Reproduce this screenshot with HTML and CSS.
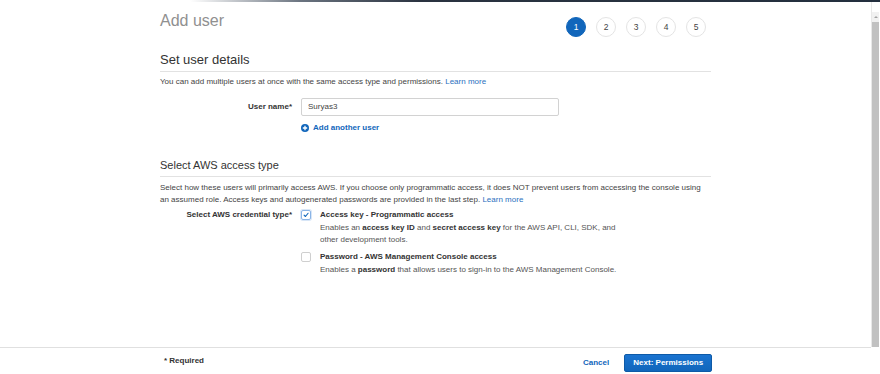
FILE: index.html
```html
<!DOCTYPE html>
<html>
<head>
<meta charset="utf-8">
<link rel="stylesheet" href="styles.css">
</head>
<body>
<div class="topbar"></div>
<div class="frame">
  <div class="page">
    <div class="content">
      <div class="header">
        <h1 class="title">Add user</h1>
        <ol class="steps">
          <li class="step active">1</li>
          <li class="step">2</li>
          <li class="step">3</li>
          <li class="step">4</li>
          <li class="step">5</li>
        </ol>
      </div>

      <h2 class="section-title">Set user details</h2>
      <p class="desc">You can add multiple users at once with the same access type and permissions. <a class="link">Learn more</a></p>

      <div class="form-row">
        <label class="label">User name*</label>
        <div class="control">
          <div class="input">Suryas3</div>
          <a class="add-user">
            <svg class="plus" viewBox="0 0 8 8" width="8" height="8"><circle cx="4" cy="4" r="4" fill="#1166bb"/><path d="M4 1.8v4.4M1.8 4h4.4" stroke="#fff" stroke-width="1.3"/></svg>
            Add another user
          </a>
        </div>
      </div>

      <h3 class="section-sub">Select AWS access type</h3>
      <p class="desc desc2">Select how these users will primarily access AWS. If you choose only programmatic access, it does NOT prevent users from accessing the console using<br>an assumed role. Access keys and autogenerated passwords are provided in the last step. <a class="link">Learn more</a></p>

      <div class="form-row cred-row">
        <label class="label">Select AWS credential type*</label>
        <div class="control options">
          <div class="option">
            <span class="checkbox checked"><svg viewBox="0 0 10 10" width="10" height="10"><path d="M2.6 5.2 4.3 6.9 7.6 2.8" fill="none" stroke="#1166bb" stroke-width="1.4" stroke-linecap="round" stroke-linejoin="round"/></svg></span>
            <div class="option-text">
              <div class="option-title">Access key - Programmatic access</div>
              <div class="option-desc">Enables an <b>access key ID</b> and <b>secret access key</b> for the AWS API, CLI, SDK, and<br>other development tools.</div>
            </div>
          </div>
          <div class="option">
            <span class="checkbox"></span>
            <div class="option-text">
              <div class="option-title">Password - AWS Management Console access</div>
              <div class="option-desc">Enables a <b>password</b> that allows users to sign-in to the AWS Management Console.</div>
            </div>
          </div>
        </div>
      </div>
    </div>
  </div>
  <div class="scrollbar">
    <div class="scroll-arrow"><span class="tri"></span></div>
    <div class="scroll-thumb"></div>
  </div>
</div>
<div class="footer">
  <div class="footer-inner">
    <span class="required">* Required</span>
    <div class="actions">
      <a class="cancel">Cancel</a>
      <button class="primary">Next: Permissions</button>
    </div>
  </div>
</div>
<div class="bottombar"></div>
</body>
</html>
```

FILE: styles.css
```css
* { box-sizing: border-box; }
html, body { margin: 0; padding: 0; }
body {
  width: 880px;
  height: 374px;
  overflow: hidden;
  background: #fff;
  font-family: "Liberation Sans", Arial, sans-serif;
  color: #444;
}
.topbar {
  height: 2px;
  background: linear-gradient(to right, #fff 0, #fff 190px, #6b7480 300px, #2a3340 420px, #232f3e 100%);
}
.frame {
  display: flex;
  height: 345px;
}
.page {
  flex: 1;
  padding-left: 160px;
}
.content {
  width: 551px;
  padding-top: 9px;
}
.header {
  display: flex;
  justify-content: space-between;
  align-items: flex-start;
}
.title {
  margin: 0;
  font-size: 16px;
  line-height: 20px;
  font-weight: normal;
  color: #909090;
}
.steps {
  list-style: none;
  margin: 6px 5px 0 0;
  padding: 0;
  display: flex;
  gap: 10px;
}
.step {
  width: 20px;
  height: 20px;
  border-radius: 50%;
  border: 1px solid #e4e4e4;
  font-size: 8.5px;
  color: #444;
  display: flex;
  align-items: center;
  justify-content: center;
}
.step.active {
  background: #1166bb;
  border-color: #1166bb;
  color: #fff;
}
.section-title {
  margin: 15px 0 0;
  font-size: 13px;
  line-height: 16px;
  font-weight: normal;
  color: #333;
  padding-bottom: 3px;
  border-bottom: 1px solid #e2e2e2;
}
.desc {
  margin: 4px 0 0;
  font-size: 8px;
  line-height: 11px;
  color: #444;
}
.link { color: #2a70c0; }
.form-row {
  display: flex;
  gap: 9px;
  margin-top: 11px;
}
.label {
  width: 132px;
  flex: none;
  text-align: right;
  font-size: 8px;
  font-weight: bold;
  color: #333;
  line-height: 18px;
}
.control { flex: none; }
.input {
  width: 258px;
  height: 18px;
  border: 1px solid #d2d2d2;
  border-radius: 2px;
  font-size: 8px;
  line-height: 16px;
  padding-left: 6px;
  color: #444;
}
.add-user {
  display: flex;
  align-items: center;
  gap: 4px;
  margin-top: 7px;
  font-size: 8px;
  line-height: 10px;
  font-weight: bold;
  color: #1166bb;
}
.plus { display: block; }
.section-sub {
  margin: 25px 0 0;
  font-size: 11px;
  line-height: 14px;
  font-weight: normal;
  color: #333;
  padding-bottom: 4px;
  border-bottom: 1px solid #e2e2e2;
}
.desc2 { margin-top: 5px; line-height: 11.5px; }
.cred-row { margin-top: 4px; }
.cred-row .label { line-height: 11px; }
.options {
  display: flex;
  flex-direction: column;
  gap: 6px;
}
.option {
  display: flex;
  gap: 9px;
}
.checkbox {
  width: 10px;
  height: 10px;
  margin-top: 1px;
  flex: none;
  border: 1px solid #cfcfcf;
  border-radius: 2px;
  display: flex;
  align-items: center;
  justify-content: center;
}
.checkbox svg { display: block; }
.checkbox.checked {
  border-color: #8ab4e6;
  box-shadow: 0 0 0 1px #d8e6f7;
}
.option-title {
  font-size: 8px;
  line-height: 11px;
  font-weight: bold;
  color: #333;
}
.option-desc {
  margin-top: 2px;
  font-size: 8px;
  line-height: 11.5px;
  color: #555;
}
.option-desc b { color: #333; }
.scrollbar {
  width: 8px;
  margin-right: 1px;
  padding-top: 10px;
  display: flex;
  flex-direction: column;
  border-left: 1px solid #e8e8e8;
}
.scroll-arrow {
  height: 10px;
  background: #f1f1f1;
  display: flex;
  align-items: center;
  justify-content: center;
}
.tri {
  width: 0;
  height: 0;
  border-left: 2px solid transparent;
  border-right: 2px solid transparent;
  border-bottom: 2px solid #a3a3a3;
}
.scroll-thumb {
  flex: 1;
  background: #c1c1c1;
}
.footer {
  height: 27px;
  padding-right: 9px;
}
.footer-inner {
  height: 100%;
  border-top: 1px solid #e0e0e0;
  padding-left: 164px;
  display: flex;
  align-items: center;
}
.required {
  font-size: 8px;
  font-weight: bold;
  color: #333;
  width: 419px;
  padding-bottom: 1px;
}
.actions {
  display: flex;
  align-items: center;
  gap: 15px;
  margin-top: 3px;
}
.cancel {
  font-size: 8px;
  font-weight: bold;
  color: #1166bb;
}
.primary {
  width: 88px;
  height: 18px;
  padding: 0;
  border: 1px solid #0e5aa7;
  border-radius: 2px;
  background: linear-gradient(#1a73d0, #1166bb);
  color: #fff;
  font-family: "Liberation Sans", Arial, sans-serif;
  font-size: 8px;
  font-weight: bold;
}
.bottombar {
  height: 2px;
  background: linear-gradient(to right, #1e242c 0%, #2f353d 55%, #7d8288 80%, #c9c9c9 100%);
}
```
